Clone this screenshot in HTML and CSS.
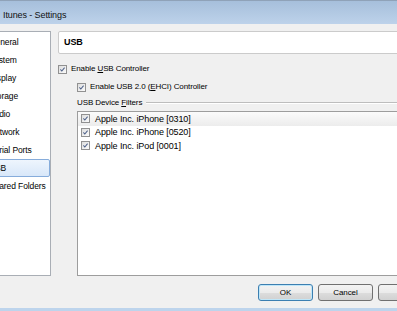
FILE: index.html
```html
<!DOCTYPE html>
<html lang="en">
<head>
    <meta charset="UTF-8">
    <meta name="viewport" content="width=device-width, initial-scale=1.0">
    <title>Itunes - Settings</title>
    <link rel="stylesheet" href="styles.css">
</head>
<body>
    <div class="window">
        <div class="titlebar">
            <span class="title">Itunes - Settings</span>
            <span class="caption-btn"></span>
        </div>

        <div class="main">
            <ul class="nav">
                <li>General</li>
                <li>System</li>
                <li>Display</li>
                <li>Storage</li>
                <li>Audio</li>
                <li>Network</li>
                <li>Serial Ports</li>
                <li class="selected">USB</li>
                <li>Shared Folders</li>
            </ul>

            <div class="page">
                <div class="page-header">USB</div>

                <label class="check">
                    <span class="box"><svg viewBox="0 0 9 9"><path d="M1.8 4.4 L3.6 6.4 L7.2 2"/></svg></span>
                    <span>Enable <u>U</u>SB Controller</span>
                </label>
                <label class="check sub">
                    <span class="box"><svg viewBox="0 0 9 9"><path d="M1.8 4.4 L3.6 6.4 L7.2 2"/></svg></span>
                    <span>Enable USB 2.0 (<u>E</u>HCI) Controller</span>
                </label>

                <div class="group-label"><span>USB Device <u>F</u>ilters</span></div>

                <div class="filters">
                    <div class="filter current">
                        <span class="box"><svg viewBox="0 0 9 9"><path d="M1.8 4.4 L3.6 6.4 L7.2 2"/></svg></span>
                        <span>Apple Inc. iPhone [0310]</span>
                    </div>
                    <div class="filter">
                        <span class="box"><svg viewBox="0 0 9 9"><path d="M1.8 4.4 L3.6 6.4 L7.2 2"/></svg></span>
                        <span>Apple Inc. iPhone [0520]</span>
                    </div>
                    <div class="filter">
                        <span class="box"><svg viewBox="0 0 9 9"><path d="M1.8 4.4 L3.6 6.4 L7.2 2"/></svg></span>
                        <span>Apple Inc. iPod [0001]</span>
                    </div>
                </div>
            </div>
        </div>

        <div class="footer">
            <button class="btn default">OK</button>
            <button class="btn">Cancel</button>
            <button class="btn">Help</button>
        </div>
    </div>
</body>
</html>
```

FILE: styles.css
```css
body {
    margin: 0;
    width: 397px;
    height: 311px;
    overflow: hidden;
    font-family: "Liberation Sans", Arial, sans-serif;
    font-size: 8px;
    letter-spacing: -0.1px;
    color: #000;
}
.window {
    margin-left: -38px;
    width: 480px;
    height: 311px;
    box-sizing: border-box;
    background: #f0f0f0;
    border-bottom: 3px solid #bdd4ec;
    display: flex;
    flex-direction: column;
}
.titlebar {
    height: 24px;
    box-sizing: border-box;
    border-top: 1px solid #8fa2b8;
    background: linear-gradient(#a6bfdb, #bdd2ea);
    display: flex;
    align-items: flex-start;
    padding-top: 9px;
    padding-left: 41px;
    flex: none;
}
.title {
    font-size: 9px;
    line-height: 11px;
    color: #111;
}
.caption-btn {
    margin-left: auto;
    margin-top: -1px;
    width: 13px;
    height: 12px;
    box-sizing: border-box;
    border: 1px solid #7b8ba0;
    border-right: none;
    border-radius: 3px 0 0 3px;
    background: linear-gradient(#eef2f7, #d3dce7);
}
.main {
    flex: 1;
    display: flex;
    gap: 7px;
    padding: 7px 0 0 8px;
    min-height: 0;
}
.nav {
    list-style: none;
    margin: 0;
    padding: 1px 0 0 0;
    width: 81px;
    box-sizing: border-box;
    border: 1px solid #a9aeb5;
    background: #fff;
    flex: none;
    font-size: 8.5px;
}
.nav li {
    height: 18px;
    line-height: 18px;
    padding-left: 18px;
    box-sizing: border-box;
    white-space: nowrap;
}
.nav li.selected {
    border: 1px solid #86acdb;
    border-radius: 2px;
    line-height: 16px;
    padding-left: 17px;
    background: linear-gradient(#eef5fd, #d8e7f9);
}
.page {
    flex: 1;
    display: flex;
    flex-direction: column;
}
.page-header {
    height: 23px;
    box-sizing: border-box;
    border: 1px solid #cbcbcb;
    border-radius: 2px;
    background: #fff;
    font-weight: bold;
    font-size: 9px;
    line-height: 21px;
    padding-left: 5px;
}
.check {
    display: flex;
    align-items: center;
    gap: 4px;
    height: 12px;
    line-height: 12px;
    margin-top: 9px;
    white-space: nowrap;
}
.check.sub {
    margin-top: 6px;
    padding-left: 19px;
}
.box {
    width: 9px;
    height: 9px;
    box-sizing: border-box;
    border: 1px solid #919191;
    background: linear-gradient(135deg, #dedede, #fbfbfb);
    display: inline-flex;
    flex: none;
}
.box svg {
    width: 7px;
    height: 7px;
}
.box path {
    fill: none;
    stroke: #4e6189;
    stroke-width: 1.3;
}
.group-label {
    display: flex;
    align-items: center;
    height: 12px;
    line-height: 12px;
    margin-top: 4px;
    padding-left: 19px;
    white-space: nowrap;
}
.group-label::after {
    content: "";
    flex: 1;
    margin-left: 4px;
    margin-top: -1px;
    border-top: 1px solid #bdbdbd;
    border-bottom: 1px solid #fff;
}
.filters {
    flex: 1;
    margin: 2px 0 0 19px;
    border: 1px solid #9d9d9d;
    background: #fff;
}
.filter {
    display: flex;
    align-items: center;
    gap: 5px;
    height: 13.5px;
    padding-left: 3px;
    white-space: nowrap;
    font-size: 9px;
}
.filter.current {
    background: linear-gradient(#fbfbfb, #ececec);
}
.footer {
    flex: none;
    height: 32px;
    box-sizing: border-box;
    padding: 8px 9px 0 0;
    display: flex;
    justify-content: flex-end;
    align-items: flex-start;
    gap: 5px;
}
.btn {
    width: 55px;
    height: 17px;
    padding: 0;
    border: 1px solid #707070;
    border-radius: 3px;
    background: linear-gradient(#f3f3f3 0%, #ebebeb 50%, #dddddd 51%, #d1d1d1 100%);
    font-family: "Liberation Sans", Arial, sans-serif;
    font-size: 8px;
    letter-spacing: -0.1px;
    color: #000;
}
.btn.default {
    border-color: #3c7fb1;
    box-shadow: inset 0 0 0 1px #bfe6f8;
}
```
